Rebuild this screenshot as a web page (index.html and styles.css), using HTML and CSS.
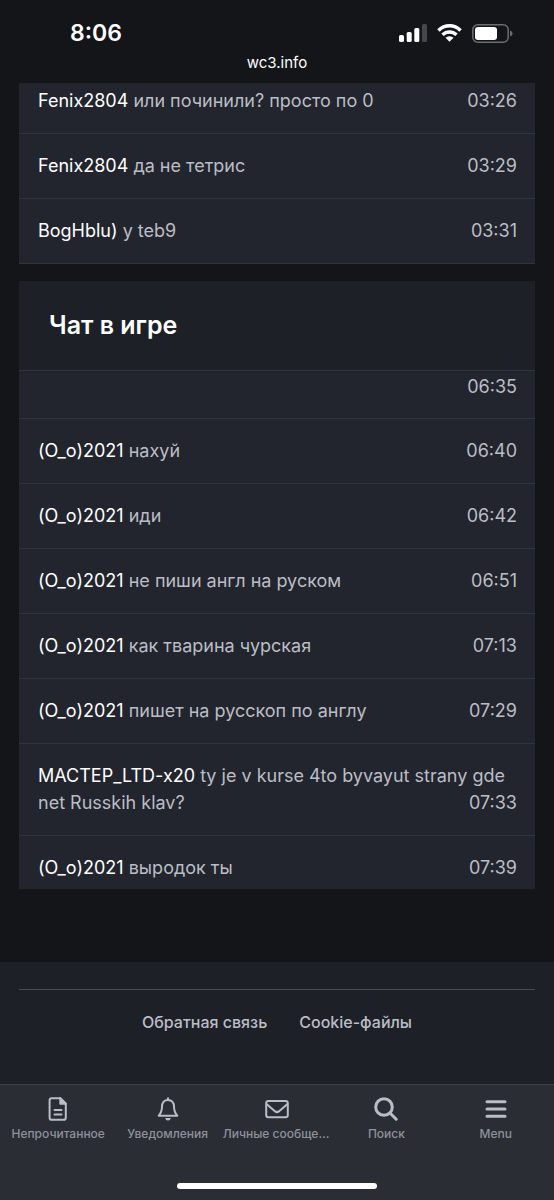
FILE: index.html
```html
<!DOCTYPE html>
<html lang="ru">
<head>
<meta charset="utf-8">
<meta name="viewport" content="width=device-width, initial-scale=1">
<title>wc3.info</title>
<link rel="stylesheet" href="styles.css">
</head>
<body>
<header class="status">
  <div class="status-row">
    <time class="clock">8:06</time>
    <div class="status-icons">
      <svg width="28" height="18" viewBox="0 0 28 18" fill="#fff" aria-hidden="true">
        <rect x="0" y="11" width="5" height="7" rx="1.5"/><rect x="7.700" y="8" width="5" height="10" rx="1.500"/><rect x="15.300" y="4" width="5" height="14" rx="1.500"/><rect x="23" y="0" width="5" height="18" rx="1.500" fill="#46474a"/>
      </svg>
      <svg width="25" height="18" viewBox="0 0 26 18" fill="none" stroke="#fff" stroke-width="3.600" aria-hidden="true">
        <path d="M1.500 6.300C8-.1 18-.1 24.500 6.300"/><path d="M5.700 10.900C10 6.900 16 6.900 20.300 10.900"/><path d="M13 18l-4.200-4.100a6.200 6.200 0 0 1 8.400 0z" fill="#fff" stroke="none"/>
      </svg>
      <svg width="41" height="19" viewBox="0 0 41 19" aria-hidden="true">
        <rect x=".8" y=".8" width="35.400" height="17.400" rx="5" fill="none" stroke="#6b6c6f" stroke-width="1.500"/><rect x="3" y="3" width="22" height="13" rx="3" fill="#fff"/><path d="M38 6.500q2.600 1 2.600 3t-2.600 3z" fill="#6b6c6f"/>
      </svg>
    </div>
  </div>
  <div class="domain">wc3.info</div>
</header>

<main class="content">
  <section class="panel" aria-label="Чат">
    <ul class="messages">
      <li class="message message-cut"><span class="name">Fenix2804</span> или починили? просто по 0<time class="time">03:26</time></li>
      <li class="message"><span class="name">Fenix2804</span> да не тетрис<time class="time">03:29</time></li>
      <li class="message"><span class="name">BogHblu)</span> y teb9<time class="time">03:31</time></li>
    </ul>
  </section>
  <section class="panel">
    <h2 class="panel-title">Чат в игре</h2>
    <ul class="messages">
      <li class="message message-top"><time class="time">06:35</time></li>
      <li class="message"><span class="name">(O_o)2021</span> нахуй<time class="time">06:40</time></li>
      <li class="message"><span class="name">(O_o)2021</span> иди<time class="time">06:42</time></li>
      <li class="message"><span class="name">(O_o)2021</span> не пиши англ на руском<time class="time">06:51</time></li>
      <li class="message"><span class="name">(O_o)2021</span> как тварина чурская<time class="time">07:13</time></li>
      <li class="message"><span class="name">(O_o)2021</span> пишет на русскоп по англу<time class="time">07:29</time></li>
      <li class="message"><span class="name">MACTEP_LTD-x20</span> ty je v kurse 4to byvayut strany gde net Russkih klav?<time class="time">07:33</time></li>
      <li class="message message-bottom"><span class="name">(O_o)2021</span> выродок ты<time class="time">07:39</time></li>
    </ul>
  </section>
</main>

<footer class="footer">
  <div class="footer-links">
    <a href="#feedback">Обратная связь</a>
    <a href="#cookies">Cookie-файлы</a>
  </div>
</footer>

<div class="bottom">
  <nav class="tabs">
    <a class="tab" href="#unread">
      <svg class="icon" viewBox="0 0 24 24" aria-hidden="true"><path d="M5.700 1.200h8.600l5.500 5.500v14q0 2.100-2.100 2.100h-12q-2.100 0-2.100-2.100V3.300q0-2.100 2.100-2.100z"/><path d="M14.300 1.200v5.500h5.500z" fill="currentColor"/><path d="M8.500 13h7M8.500 17.500h7"/></svg>
      <span class="label">Непрочитанное</span></a>
    <a class="tab" href="#alerts">
      <svg class="icon" viewBox="0 0 24 24" aria-hidden="true"><path d="M12 1.200v1.700M12 2.900c-4 0-6 3-6 6.600 0 4.500-1 6.700-3.300 9.200h18.600C19 16.200 18 14 18 9.500c0-3.600-2-6.600-6-6.600z"/><path d="M9.200 20.900h5.600q-.6 2.600-2.800 2.600t-2.800-2.600z" fill="currentColor" stroke="none"/></svg>
      <span class="label">Уведомления</span></a>
    <a class="tab" href="#messages">
      <svg class="icon" viewBox="0 0 24 24" aria-hidden="true"><rect x="1.200" y="4" width="21.600" height="16.200" rx="2.200"/><path d="M1.800 7.200l8.400 7.200q1.800 1.400 3.600 0l8.400-7.200"/></svg>
      <span class="label">Личные сообщения</span></a>
    <a class="tab" href="#search">
      <svg class="icon icon-heavy" viewBox="0 0 24 24" aria-hidden="true"><circle cx="10" cy="10" r="8.300"/><path d="M16.200 16.200l6 6"/></svg>
      <span class="label">Поиск</span></a>
    <a class="tab" href="#menu">
      <svg class="icon icon-heavy" viewBox="0 0 24 24" aria-hidden="true"><path d="M3 4.700h18M3 12h18M3 19.300h18"/></svg>
      <span class="label">Menu</span></a>
  </nav>
  <div class="home-bar"></div>
</div>
</body>
</html>
```
FILE: styles.css
```css
* { box-sizing: border-box; }

body {
  margin: 0;
  min-height: 100vh;
  display: flex;
  flex-direction: column;
  background: #141518;
  color: #bbbdc6;
  font: 18px/27px Inter, "Noto Sans", sans-serif;
}

a { color: inherit; text-decoration: none; }

.status { padding-top: 18px; color: #fff; }

.status-row {
  display: flex;
  justify-content: space-between;
  align-items: center;
  height: 30px;
  padding: 0 41px 0 70px;
}

.clock { font-size: 23px; font-weight: 600; }

.status-icons { display: flex; align-items: center; gap: 10px; }

.domain {
  padding: 5px 0 10px;
  font-size: 15px;
  line-height: 20px;
  text-align: center;
}

.content {
  display: flex;
  flex-direction: column;
  gap: 17px;
  padding: 0 19px 73px;
}

.panel { background: #22252d; }

.panel-title {
  margin: 0;
  padding: 28px 30px;
  border-bottom: 1px solid #30353d;
  background: #1d2027;
  color: #fff;
  font-size: 25px;
  font-weight: 600;
  line-height: 33px;
}

.messages { margin: 0; padding: 0; list-style: none; }

.message {
  display: flow-root;
  padding: 18px 18px 19px 19px;
  border-bottom: 1px solid #30353d;
}

.message-cut { padding-top: 4px; }

.message-top { padding-top: 2px; padding-bottom: 18px; }

.message-bottom { padding-bottom: 8px; border-bottom: 0; }

.name { color: #fff; }

.time { float: right; }

.footer {
  flex: 1;
  padding: 27px 19px 46px;
  background: #1d2027;
}

.footer-links {
  display: flex;
  justify-content: center;
  gap: 32px;
  padding-top: 19px;
  border-top: 1px solid #484b52;
  font-size: 16px;
  font-weight: 500;
}

.bottom {
  padding-bottom: 11px;
  border-top: 1px solid #3b3f46;
  background: #2a2d34;
}

.tabs {
  display: grid;
  grid-template-columns: repeat(5, minmax(0, 1fr));
  gap: 1px;
  padding: 12px 4px 42px;
}

.tab {
  display: flex;
  flex-direction: column;
  align-items: center;
  gap: 6px;
}

.icon {
  width: 24px;
  height: 24px;
  fill: none;
  stroke: currentColor;
  stroke-width: 2;
  stroke-linecap: round;
  stroke-linejoin: round;
}

.icon-heavy { stroke-width: 3; }

.label {
  max-width: 100%;
  overflow: hidden;
  color: #8f929b;
  font-size: 12px;
  font-weight: 500;
  line-height: 14px;
  text-overflow: ellipsis;
  white-space: nowrap;
}

.home-bar {
  width: 36%;
  height: 6px;
  margin: 0 auto;
  border-radius: 3px;
  background: #fff;
}
```
